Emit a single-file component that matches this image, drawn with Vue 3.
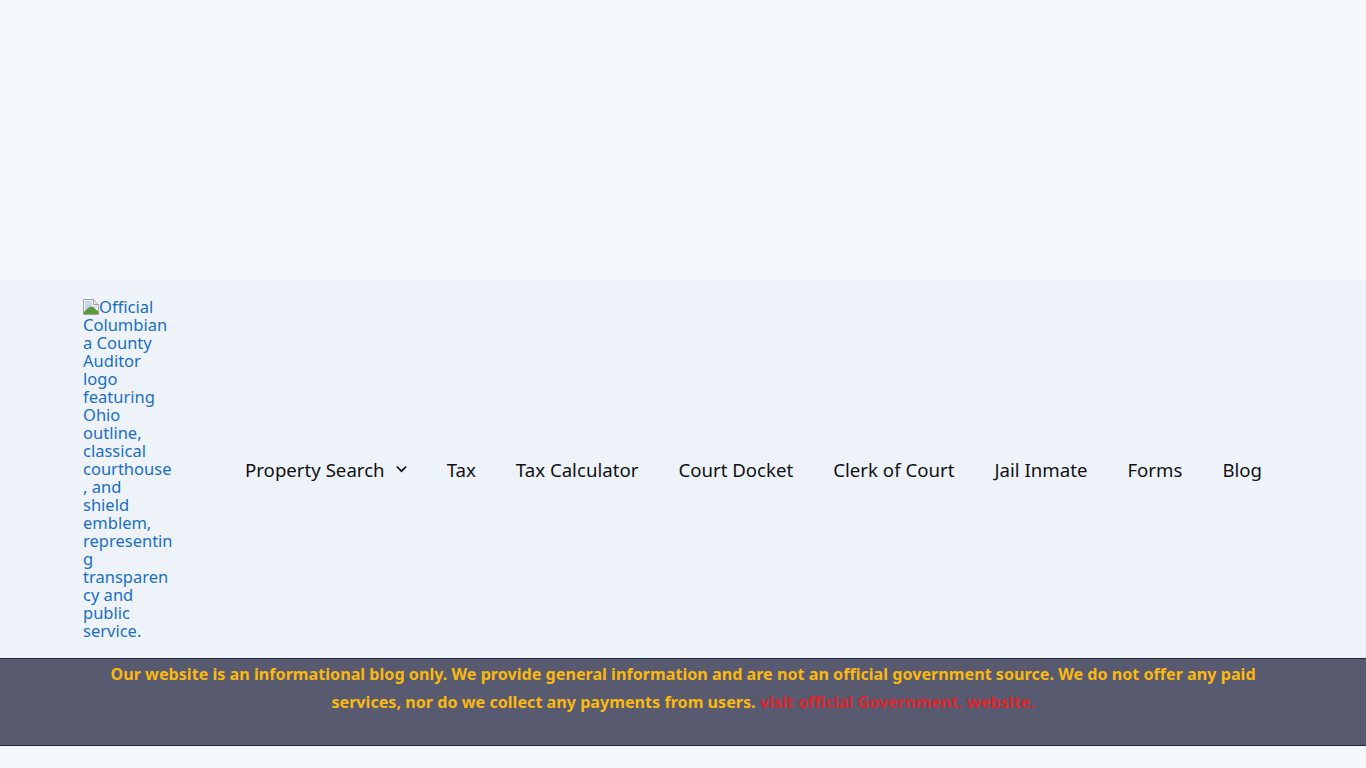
<script setup>
const navItems = ['Tax', 'Tax Calculator', 'Court Docket', 'Clerk of Court', 'Jail Inmate', 'Forms', 'Blog']
</script>

<template>
  <div class="page">
    <div class="top-space"></div>
    <header class="header">
      <a class="logo" href="#">
        <svg class="broken" width="16" height="16" viewBox="0 0 16 16">
          <path d="M0.5 0.5H10.5L15.5 5.5V15.5H0.5Z" fill="#fff" stroke="#a0a0a0" />
          <path d="M10.5 0.5V5.5H15.5" fill="#e4e4e4" stroke="#a0a0a0" />
          <path d="M2 2H9V7H14V8L2 11Z" fill="#c4d6f0" />
          <path d="M1 15V13C4 9 7 7 10 8C12 9 13 11 15 12V15Z" fill="#5a9a3c" />
        </svg>Official Columbiana County Auditor logo featuring Ohio outline, classical courthouse, and<br />shield emblem, representing transparency and public service.
      </a>
      <nav class="nav">
        <a class="nav-link" href="#">
          Property Search
          <svg class="chev" width="11" height="8" viewBox="0 0 11 8">
            <path d="M0.8 1.5L5.5 6.2L10.2 1.5" fill="none" stroke="#111" stroke-width="1.7" />
          </svg>
        </a>
        <a v-for="item in navItems" :key="item" class="nav-link" href="#">{{ item }}</a>
      </nav>
    </header>
    <div class="notice">
      <p class="notice-text">
        Our website is an informational blog only. We provide general information and are not an official government source. We do not offer any paid services, nor do we collect any payments from users.
        <a class="notice-link" href="#">visit official Government. website.</a>
      </p>
    </div>
  </div>
</template>

<style>
html, body { margin: 0; background: #f5f8fb; }
</style>

<style scoped>
.page {
  min-height: 768px;
  background: #f5f8fb;
  font-family: "Noto Sans", "Open Sans", sans-serif;
}
.top-space { height: 280px; }
.header {
  height: 378px;
  box-sizing: border-box;
  background: #eef3fa;
  display: flex;
  align-items: center;
  padding: 0 83px;
}
.logo {
  width: 90px;
  color: #1a6fc0;
  font-size: 16.5px;
  line-height: 18px;
  text-decoration: none;
  overflow-wrap: anywhere;
}
.broken { vertical-align: -2px; }
.nav {
  display: flex;
  align-items: center;
  gap: 40px;
  margin-left: 72px;
}
.nav-link {
  display: flex;
  align-items: center;
  gap: 11px;
  color: #111;
  font-size: 18.65px;
  text-decoration: none;
  white-space: nowrap;
}
.notice {
  height: 88px;
  box-sizing: border-box;
  background: #585b70;
  border-top: 1px solid #1e2a3a;
  border-bottom: 1px solid #1e2a3a;
  padding: 1px 100px 0;
}
.notice-text {
  margin: 0;
  text-align: center;
  color: #fbb80f;
  font-size: 16.15px;
  font-weight: 700;
  line-height: 28px;
}
.notice-link { color: #d8262c; text-decoration: none; }
</style>
